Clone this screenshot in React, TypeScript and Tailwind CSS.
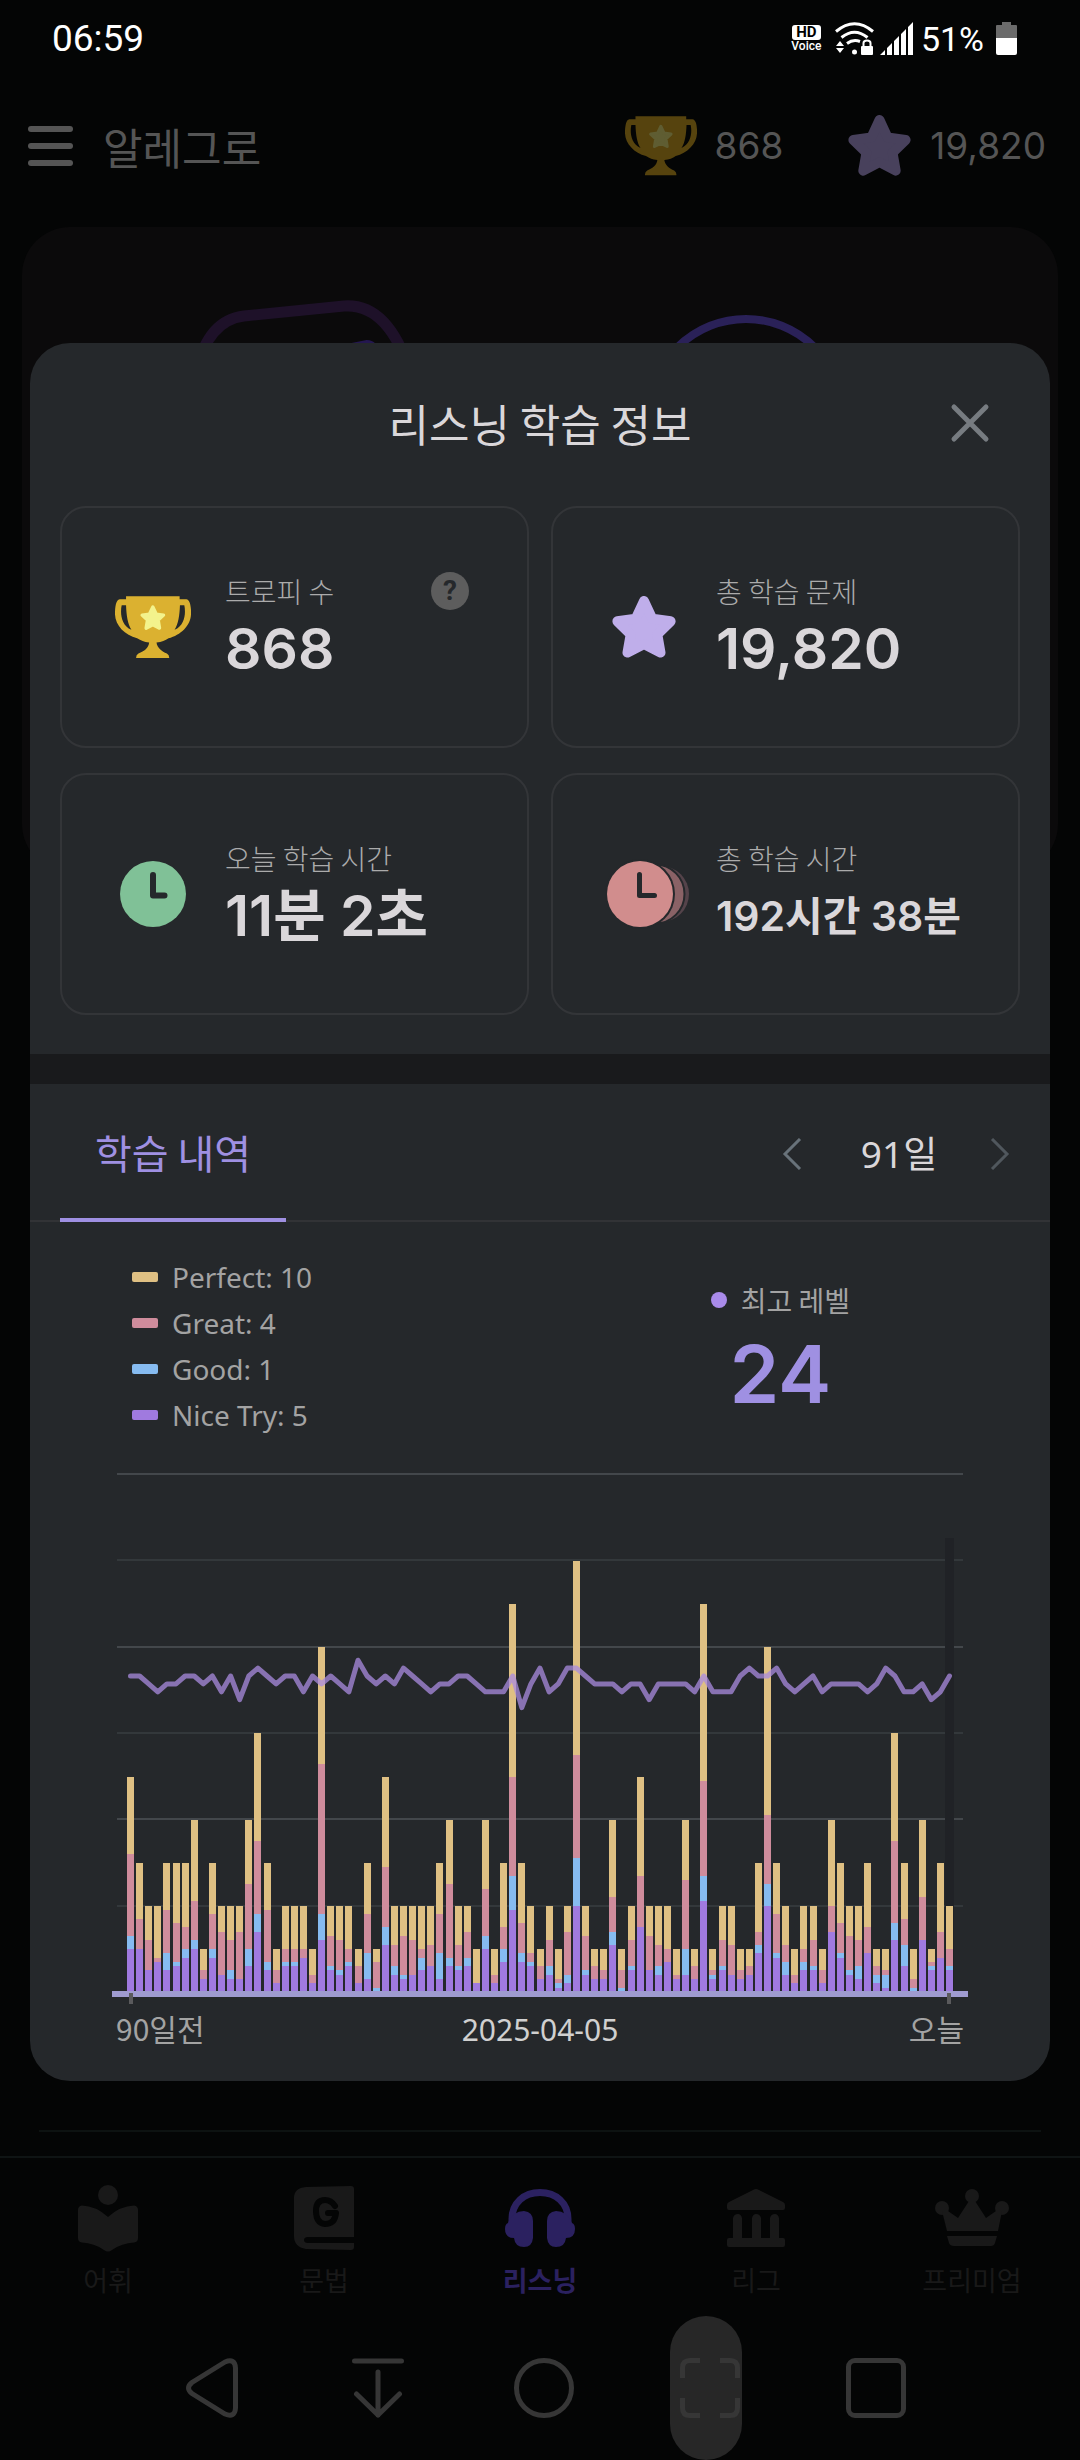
import React from "react";

// [niceTry, good, great, perfect] per day, oldest first
const DAYS: number[][] = [
  [10, 3, 19, 18], [10, 0, 7, 13], [5, 0, 7, 8], [7, 0, 1, 12], [5, 4, 10, 11], [6, 1, 9, 14], [8, 2, 5, 15],
  [10, 2, 9, 19], [3, 0, 2, 5], [8, 2, 8, 12], [4, 0, 10, 6], [3, 2, 7, 8], [3, 0, 11, 6], [6, 4, 15, 15],
  [14, 4, 17, 25], [5, 2, 12, 11], [2, 0, 3, 5], [6, 1, 3, 10], [6, 1, 3, 10], [8, 0, 2, 10], [2, 0, 2, 6],
  [12, 6, 35, 27], [5, 1, 7, 7], [4, 1, 7, 8], [6, 1, 3, 10], [2, 0, 4, 4], [3, 6, 9, 12], [0, 1, 6, 3],
  [11, 4, 14, 21], [4, 2, 5, 9], [3, 1, 9, 7], [4, 0, 8, 8], [5, 3, 2, 10], [6, 0, 5, 9], [3, 6, 9, 12],
  [6, 2, 17, 15], [5, 1, 5, 9], [6, 2, 6, 6], [2, 0, 0, 8], [10, 3, 11, 16], [2, 0, 2, 6], [7, 3, 5, 15],
  [19, 8, 23, 40], [7, 2, 7, 14], [6, 1, 2, 11], [3, 0, 3, 4], [4, 2, 6, 8], [1, 1, 1, 7], [2, 2, 10, 6],
  [20, 11, 24, 45], [4, 1, 8, 7], [3, 0, 3, 4], [3, 0, 2, 5], [11, 3, 8, 18], [0, 1, 4, 5], [5, 1, 6, 8],
  [15, 0, 12, 23], [5, 0, 8, 7], [4, 2, 5, 9], [7, 0, 3, 10], [3, 0, 1, 6], [4, 6, 16, 14], [3, 0, 3, 4],
  [21, 6, 22, 41], [3, 1, 1, 5], [5, 1, 6, 8], [4, 0, 7, 9], [3, 0, 2, 5], [4, 0, 2, 4], [9, 2, 3, 16],
  [20, 5, 16, 39], [8, 1, 9, 12], [4, 3, 4, 9], [2, 0, 2, 6], [5, 2, 3, 10], [5, 1, 6, 8], [2, 0, 3, 5],
  [14, 0, 6, 20], [8, 1, 7, 14], [4, 1, 8, 7], [3, 3, 6, 8], [9, 0, 6, 15], [2, 2, 2, 4], [1, 3, 1, 5],
  [12, 4, 19, 25], [6, 5, 6, 13], [0, 1, 2, 7], [12, 0, 10, 18], [5, 1, 1, 3], [8, 0, 6, 16], [5, 1, 4, 10],
];

const LEVELS = [
  24, 24, 23, 22, 23, 23, 24, 24, 23, 24, 22, 24, 21, 24, 25, 24, 23, 24, 24, 22, 24, 23, 24, 23, 22, 26, 24, 23, 24, 23,
  25, 24, 23, 22, 23, 23, 24, 24, 23, 22, 22, 22, 24, 20, 23, 25, 22, 23, 25, 25, 24, 23, 23, 23, 22, 23, 23, 21, 23, 23,
  23, 23, 22, 24, 22, 22, 22, 24, 25, 24, 24, 25, 23, 22, 23, 24, 22, 23, 23, 23, 23, 22, 23, 25, 24, 22, 22, 23, 21, 22,
  24,
];

const BAR_COLORS = ["#a07adf", "#86bbf0", "#cf8c9c", "#dfc083"];
const GRID_Y = [1, 87, 174, 260, 346, 433];

const LEGEND = [
  { label: "Perfect: 10", color: "bg-[#dfc083]" },
  { label: "Great: 4", color: "bg-[#cf8c9c]" },
  { label: "Good: 1", color: "bg-[#86bbf0]" },
  { label: "Nice Try: 5", color: "bg-[#a07adf]" },
];

const Trophy: React.FC<{ className: string; star: string }> = ({ className, star }) => (
  <svg viewBox="0 0 227 188" className={className} fill="currentColor">
    <path
      fillRule="evenodd"
      d="M33 1H193V10H213C224 11 228 32 227 55C226 88 196 117 160 126C150 133 140 137 124 139C126 155 140 166 155 172Q163 177 162 187H63Q62 177 70 172C88 165 100 155 102 139C86 137 78 133 66 126C30 117 1 88 0 55C0 32 3 11 14 10H33ZM20 28C15 50 18 88 49 101C38 85 34 58 33 28ZM207 28H194C193 58 189 85 178 101C209 88 212 50 207 28Z"
    />
    <path
      fill={star}
      stroke={star}
      strokeWidth="10"
      strokeLinejoin="round"
      d="M113 33L123 54L145 57L129 72L133 96L113 86L93 96L97 72L81 57L103 54Z"
    />
  </svg>
);

const Star: React.FC<{ className: string }> = ({ className }) => (
  <svg viewBox="0 0 64 62" className={className} fill="currentColor" stroke="currentColor" strokeWidth="10" strokeLinejoin="round">
    <path d="M32 5L40.2 22.7L58.6 25.3L45.3 38.3L48.5 56.6L32 48L15.5 56.6L18.7 38.3L5.4 25.3L23.8 22.7Z" />
  </svg>
);

const Clock: React.FC = () => (
  <svg viewBox="0 0 66 66" className="w-[66px] text-[#80c197]">
    <circle cx="33" cy="33" r="33" fill="currentColor" />
    <path d="M33 14V34.5H44.5" fill="none" stroke="#25282b" strokeWidth="6" strokeLinecap="round" strokeLinejoin="round" />
  </svg>
);

const ClockStack: React.FC = () => (
  <svg viewBox="0 0 74 66" className="w-[74px] overflow-visible">
    <circle cx="54" cy="33" r="28" fill="#54434a" />
    <circle cx="48" cy="33" r="29.5" fill="#8a6266" stroke="#25282b" strokeWidth="2" />
    <circle cx="33" cy="33" r="35" fill="#25282b" />
    <circle cx="33" cy="33" r="33" fill="#d18d8d" />
    <path d="M32.5 13.5V34.5H47.5" fill="none" stroke="#25282b" strokeWidth="5" strokeLinecap="round" strokeLinejoin="round" />
  </svg>
);

const StatusBar: React.FC = () => (
  <div className="flex h-[74px] items-center justify-between pl-[52px] pr-[63px] pt-[3px] text-white [font-family:Roboto,sans-serif]">
    <span className="text-[37px] leading-[40px]">06:59</span>
    <div className="flex items-center">
      <div className="flex w-[29px] flex-col items-center">
        <span className="w-full rounded-[3px] bg-white text-center text-[15px] font-bold leading-[15px] text-black">HD</span>
        <span className="text-[12px] font-medium leading-[12px]">Voice</span>
      </div>
      <svg viewBox="0 0 39 33" className="ml-[14px] w-[39px]" fill="none" stroke="white" strokeWidth="3">
        <path d="M1 9.500Q19.500 -6 38 9.500M6.500 15.500Q19.500 5 32.500 15.500M12 21.500Q18 17 25 19.500" />
        <path d="M5 19L9 24H1ZM5 31L1 26H9Z" fill="white" stroke="none" />
        <circle cx="19.500" cy="30" r="2.500" fill="white" stroke="none" />
        <rect x="26" y="24" width="12" height="9" rx="1" fill="white" stroke="none" />
        <path d="M28.500 24V21Q28.500 18.500 32 18.500Q35.500 18.500 35.500 21V24" strokeWidth="2" />
      </svg>
      <svg viewBox="0 0 33 33" className="ml-[6px] w-[33px]" fill="white">
        <path d="M0 33L5 28V33ZM7 33V26L12 21V33ZM14 33V19L19 14V33ZM21 33V12L26 7V33ZM28 33V5L33 0V33Z" />
      </svg>
      <span className="ml-[8px] text-[34px] leading-[40px]">51%</span>
      <svg viewBox="0 0 21 33" className="ml-[12px] w-[21px]">
        <path d="M6 0H15V3H20Q21 3 21 4V16H0V4Q0 3 1 3H6Z" fill="#6b6b6b" />
        <path d="M0 16H21V31Q21 33 19 33H2Q0 33 0 31Z" fill="white" />
      </svg>
    </div>
  </div>
);

const Header: React.FC = () => (
  <header className="flex h-[144px] items-center pl-[28px] pr-[34px] text-[#555555]">
    <button type="button" aria-label="메뉴" className="flex w-[45px] flex-col gap-[11px]">
      <span className="h-[6px] rounded-full bg-[#555555]" />
      <span className="h-[6px] rounded-full bg-[#555555]" />
      <span className="h-[6px] rounded-full bg-[#555555]" />
    </button>
    <h1 className="ml-[30px] text-[43px] leading-[60px]">알레그로</h1>
    <div className="ml-auto flex items-center [font-family:Inter,sans-serif]">
      <Trophy className="w-[72px] text-[#56430e]" star="#5f5d32" />
      <span className="ml-[18px] text-[37px] leading-[48px]">868</span>
      <Star className="ml-[65px] w-[63px] text-[#48415c]" />
      <span className="ml-[19px] text-[37px] leading-[48px]">19,820</span>
    </div>
  </header>
);

interface StatProps {
  icon: React.ReactNode;
  label: string;
  value: string;
  small?: boolean;
  help?: boolean;
}

const StatCard: React.FC<StatProps> = ({ icon, label, value, small, help }) => (
  <div className="flex h-[242px] items-center rounded-[26px] border-2 border-[#333538] pl-[51px]">
    <div className="flex w-[80px] shrink-0 justify-center">{icon}</div>
    <div className="ml-[32px] mt-[4px] whitespace-nowrap">
      <div className="text-[28px] font-light leading-[36px] text-[#ababab]">{label}</div>
      <div
        className={
          small
            ? "mt-[4px] text-[41px] font-semibold leading-[72px] text-[#dad7da] [font-family:Inter,'Noto_Sans_CJK_KR',sans-serif]"
            : "mt-[4px] text-[57px] font-semibold leading-[72px] text-[#dad7da] [font-family:Inter,'Noto_Sans_CJK_KR',sans-serif]"
        }
      >
        {value}
      </div>
    </div>
    {help && (
      <button
        type="button"
        aria-label="도움말"
        className="ml-auto mr-[58px] mt-[64px] h-[38px] w-[38px] self-start rounded-full bg-[#5d5d5d] text-center text-[28px] font-bold leading-[38px] text-[#25282b] [font-family:Roboto,sans-serif]"
      >
        ?
      </button>
    )}
  </div>
);

const HistoryChart: React.FC = () => {
  const baseY = 520;
  const unit = 4.31;
  const points = LEVELS.map((lv, i) => `${18.5 + i * 9.1},${204 + (24 - lv) * 7.9}`).join(" ");

  return (
    <svg viewBox="0 0 856 532" className="block h-auto w-full" role="img" aria-label="91일 학습 내역">
      <g shapeRendering="crispEdges">
        {GRID_Y.map((y, i) => (
          <rect key={y} x="5" y={y} width="846" height="2" fill={i % 2 ? "#33383b" : "#43474b"} />
        ))}
        <rect x="833" y="66" width="9" height="454" fill="#202226" />
        {DAYS.map((day, i) => {
          let sum = 0;
          return day.map((v, k) => {
            const bottom = baseY - Math.round(sum * unit);
            sum += v;
            const top = baseY - Math.round(sum * unit);
            return (
              <rect key={`${i}-${k}`} x={15 + Math.round(i * 9.1)} y={top} width="7" height={bottom - top} fill={BAR_COLORS[k]} />
            );
          });
        })}
        <rect x="0" y="519" width="856" height="6" fill="#9f9bd0" />
        <rect x="17" y="521" width="4" height="11" fill="#5a5a5c" />
        <rect x="835" y="521" width="4" height="11" fill="#5a5a5c" />
      </g>
      <polyline
        points={points}
        fill="none"
        stroke="#a98be0"
        strokeOpacity="0.75"
        strokeWidth="5"
        strokeLinejoin="round"
        strokeLinecap="round"
      />
    </svg>
  );
};

const StudyModal: React.FC = () => (
  <section
    role="dialog"
    aria-label="리스닝 학습 정보"
    className="absolute inset-x-[30px] top-[343px] overflow-hidden rounded-[40px] bg-[#25282b]"
  >
    <div className="grid h-[163px] grid-cols-[1fr_auto_1fr] items-center pb-[4px]">
      <h2 className="col-start-2 text-[44px] leading-[60px] text-[#dad7da]">리스닝 학습 정보</h2>
      <button type="button" aria-label="닫기" className="mr-[58px] justify-self-end text-[#777c81]">
        <svg viewBox="0 0 44 44" className="w-[44px]" fill="none" stroke="currentColor" strokeWidth="5" strokeLinecap="round">
          <path d="M6 6L38 38M38 6L6 38" />
        </svg>
      </button>
    </div>

    <div className="grid grid-cols-2 gap-x-[22px] gap-y-[25px] px-[30px] pb-[39px]">
      <StatCard icon={<Trophy className="w-[76px] text-[#dbb130]" star="#f3f38c" />} label="트로피 수" value="868" help />
      <StatCard icon={<Star className="w-[64px] text-[#bfaeea]" />} label="총 학습 문제" value="19,820" />
      <StatCard icon={<Clock />} label="오늘 학습 시간" value="11분 2초" />
      <StatCard icon={<ClockStack />} label="총 학습 시간" value="192시간 38분" small />
    </div>

    <div className="h-[30px] bg-[#191a1c]" />

    <div className="flex h-[138px] justify-between border-b-2 border-[#323336] pl-[30px] pr-[20px]">
      <button type="button" className="-mb-[2px] w-[226px] border-b-4 border-[#9f90e2] pt-[2px] text-[40px] text-[#9f90e2]">
        학습 내역
      </button>
      <div className="flex items-center pt-[4px]">
        <button type="button" aria-label="이전" className="flex w-[60px] justify-center text-[#68727a]">
          <svg viewBox="0 0 20 32" className="w-[20px]" fill="none" stroke="currentColor" strokeWidth="3">
            <path d="M18 1L3 16L18 31" />
          </svg>
        </button>
        <span className="w-[148px] pl-[6px] text-center text-[37px] leading-[60px] text-[#dad7da] [font-family:'Noto_Sans','Noto_Sans_CJK_KR',sans-serif]">
          91일
        </span>
        <button type="button" aria-label="다음" className="flex w-[60px] justify-center text-[#50575d]">
          <svg viewBox="0 0 20 32" className="w-[20px]" fill="none" stroke="currentColor" strokeWidth="3">
            <path d="M2 1L17 16L2 31" />
          </svg>
        </button>
      </div>
    </div>

    <div className="flex justify-between pl-[102px] pr-[200px] pt-[32px]">
      <ul className="text-[28px] text-[#a3a3a3] [font-family:'Noto_Sans',sans-serif]">
        {LEGEND.map((item) => (
          <li key={item.label} className="flex items-center leading-[46px]">
            <span className={`mr-[14px] h-[10px] w-[26px] rounded-[2px] ${item.color}`} />
            {item.label}
          </li>
        ))}
      </ul>
      <div className="flex flex-col items-center pt-[28px]">
        <div className="flex items-center text-[28px] leading-[36px] text-[#a3a3a3]">
          <span className="mr-[14px] h-[16px] w-[16px] rounded-full bg-[#a98bea]" />
          최고 레벨
        </div>
        <strong className="mt-[12px] text-[80px] font-semibold leading-[88px] text-[#9f90e2] [font-family:Inter,sans-serif]">24</strong>
      </div>
    </div>

    <div className="px-[82px] pb-[33px] pt-[34px]">
      <HistoryChart />
      <div className="mt-[4px] flex justify-between px-[4px] text-[30px] leading-[40px] text-[#a3a3a3]">
        <span className="w-[120px]">90일전</span>
        <span className="self-end leading-[36px] text-[#d0d0d0] [font-family:'Noto_Sans',sans-serif]">2025-04-05</span>
        <span className="w-[120px] text-right">오늘</span>
      </div>
    </div>
  </section>
);

const TABS = [
  {
    name: "어휘",
    icon: (
      <svg viewBox="0 0 60 67" className="w-[60px]" fill="currentColor">
        <circle cx="30" cy="10" r="10" />
        <path d="M30 32Q18 21 4 20.500Q0 21 0 25V53Q0 57 4 57.500Q16 58 26 65Q30 68 34 65Q44 58 56 57.500Q60 57 60 53V25Q60 21 56 20.500Q42 21 30 32Z" />
      </svg>
    ),
  },
  {
    name: "문법",
    icon: (
      <svg viewBox="0 0 60 64" className="w-[60px]" fill="currentColor">
        <path d="M12 1L57 0Q60 0 60 3V51H14Q10 51 10 54Q10 57 14 57H60V61Q60 64 57 64L12 63Q0 61 0 50V12Q0 2 12 1Z" />
        <path d="M41 20Q37 14 31 14Q22 14 22 25Q22 37 31 38Q41 38 42 27H34" fill="none" stroke="#040505" strokeWidth="6" strokeLinecap="round" strokeLinejoin="round" />
      </svg>
    ),
  },
  {
    name: "리스닝",
    active: true,
    icon: (
      <svg viewBox="0 0 70 58" className="w-[70px]" fill="currentColor">
        <path d="M7 34V30C7 14 19 3.500 35 3.500C51 3.500 63 14 63 30V34" fill="none" stroke="currentColor" strokeWidth="7" />
        <path d="M3 34Q8 22 19 22Q28 23 28 32V49Q27 58 19 58Q10 58 9 49Q0 49 0 40Q0 35 3 34ZM67 34Q62 22 51 22Q42 23 42 32V49Q43 58 51 58Q60 58 61 49Q70 49 70 40Q70 35 67 34Z" />
      </svg>
    ),
  },
  {
    name: "리그",
    icon: (
      <svg viewBox="0 0 58 58" className="w-[58px]" fill="currentColor">
        <path d="M26 1Q29 -1 32 1L56 13Q58 14 58 16V19Q58 21 56 21H2Q0 21 0 19V16Q0 14 2 13Z" />
        <path d="M6 49V29Q7 25 11 25Q14 25 15 29V49H25V29Q26 25 29 25Q33 25 34 29V49H43V29Q44 25 48 25Q51 25 52 29V49H56Q58 49 58 51V56Q58 58 56 58H2Q0 58 0 56V51Q0 49 2 49Z" />
      </svg>
    ),
  },
  {
    name: "프리미엄",
    icon: (
      <svg viewBox="0 0 74 58" className="w-[74px]" fill="currentColor">
        <circle cx="7" cy="19" r="7" />
        <circle cx="37" cy="7" r="7" />
        <circle cx="67" cy="19" r="7" />
        <path d="M7 22L13 22L23 29L34 12H40L51 29L61 22L67 22L63 42H12ZM12 47H62L60 54Q59 57 56 57H19Q15 57 14 54Z" />
      </svg>
    ),
  },
];

const TabBar: React.FC = () => (
  <nav className="grid h-[160px] grid-cols-5 border-t-2 border-[#0f1414]">
    {TABS.map((tab) => (
      <a
        key={tab.name}
        href="#"
        className={
          tab.active
            ? "flex flex-col items-center text-[27px] font-bold text-[#2b2160]"
            : "flex flex-col items-center text-[27px] text-[#191919]"
        }
      >
        <span className="mt-[26px] flex h-[68px] items-center">{tab.icon}</span>
        <span className="mt-[11px] leading-[34px]">{tab.name}</span>
      </a>
    ))}
  </nav>
);

const SystemBar: React.FC = () => (
  <div className="grid h-[144px] grid-cols-5 pl-[129px] pr-[121px] text-[#363636]">
    <button type="button" aria-label="뒤로" className="flex items-center justify-center">
      <svg viewBox="0 0 52 60" className="w-[52px]" fill="none" stroke="currentColor" strokeWidth="5">
        <path d="M39 4L6 24.500Q-1 30 6 35.500L39 56Q49 60 49.500 50V10Q49 0 39 4Z" />
      </svg>
    </button>
    <button type="button" aria-label="내리기" className="flex items-center justify-center">
      <svg viewBox="0 0 52 60" className="w-[52px]" fill="none" stroke="currentColor" strokeWidth="5" strokeLinecap="round" strokeLinejoin="round">
        <path d="M2.500 3H49.500M26 14V57M4.500 36L26 57L47.500 36" />
      </svg>
    </button>
    <button type="button" aria-label="홈" className="flex items-center justify-center">
      <span className="h-[60px] w-[60px] rounded-full border-[5px] border-[#363636]" />
    </button>
    <button type="button" aria-label="캡처" className="flex justify-center pr-[8px]">
      <span className="flex h-full w-[72px] items-center justify-center rounded-full bg-[#272727] pl-[8px]">
        <svg viewBox="0 0 60 60" className="w-[60px] shrink-0" fill="none" stroke="currentColor" strokeWidth="5">
          <path d="M2.500 20V10Q2.500 2.500 10 2.500H20M40 2.500H50Q57.500 2.500 57.500 10V20M57.500 40V50Q57.500 57.500 50 57.500H40M20 57.500H10Q2.500 57.500 2.500 50V40" />
        </svg>
      </span>
    </button>
    <button type="button" aria-label="최근 앱" className="flex items-center justify-center">
      <span className="h-[60px] w-[60px] rounded-[9px] border-[5px] border-[#363636]" />
    </button>
  </div>
);

const App: React.FC = () => (
  <div className="relative flex min-h-screen flex-col bg-[#040505] [font-family:'Noto_Sans_CJK_KR',sans-serif]">
    <StatusBar />
    <Header />

    <main className="flex min-h-[1930px] flex-1 flex-col px-[22px] pt-[9px]">
      <div className="h-[645px] overflow-hidden rounded-[48px] bg-[#0b0a0b]">
        <svg viewBox="0 0 1036 200" className="w-full" fill="none">
          <path d="M174 145Q186 93 222 89L322 79Q366 76 388 145" stroke="#1e1129" strokeWidth="11" />
          <path d="M290 128L345 117Q352 117 354 128" stroke="#241750" strokeWidth="8" />
          <circle cx="724" cy="189" r="97" stroke="#2a2158" strokeWidth="8" />
        </svg>
      </div>
      <hr className="mx-[17px] mb-[24px] mt-auto border-t-2 border-[#0d1211]" />
    </main>

    <TabBar />
    <SystemBar />

    <StudyModal />
  </div>
);

export default App;
